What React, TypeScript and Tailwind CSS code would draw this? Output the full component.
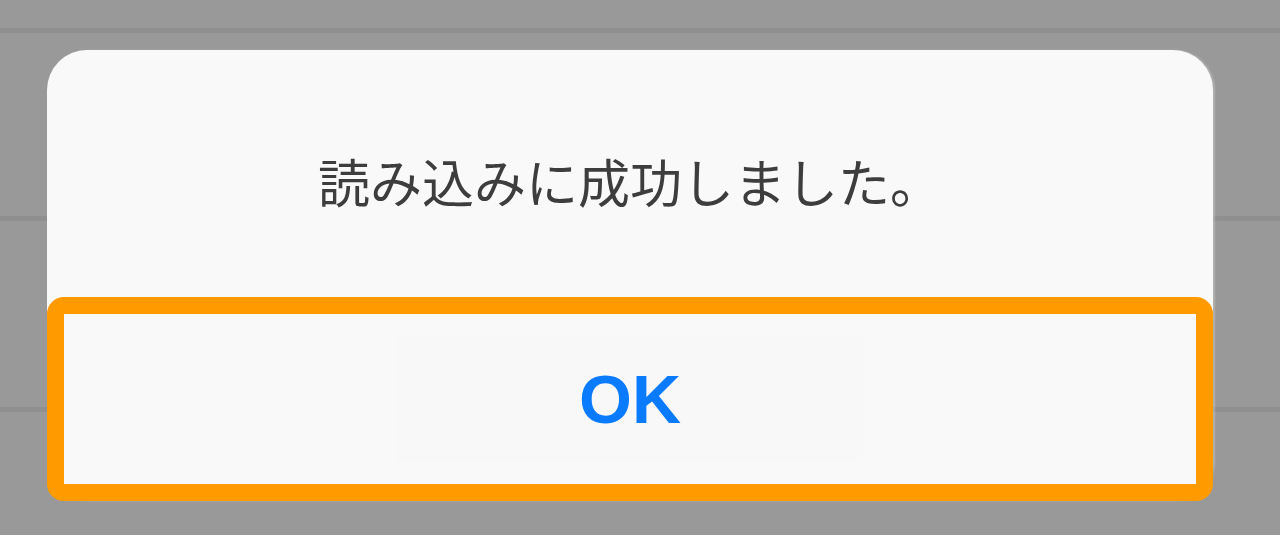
import React from 'react';

export default function App() {
  return (
    <div className="relative w-[1280px] h-[535px] overflow-hidden bg-[#999999]">
      {/* background list rows behind the alert */}
      <div className="flex flex-col">
        <div className="h-[33px] border-b-[5px] border-[#8f8f8f]" />
        <div className="h-[188px] border-b-[5px] border-[#8f8f8f]" />
        <div className="h-[191px] border-b-[5px] border-[#8f8f8f]" />
      </div>

      <div className="absolute left-[47px] top-[50px] w-[1166px] h-[451px] flex flex-col rounded-[40px] bg-[#f9f9f9] shadow-[2px_0_2px_rgba(255,255,255,0.25)]">
        <div className="h-[247px] flex items-center justify-center pt-[15px]">
          <p className="text-[52px] leading-none text-[#3d3d3d] font-['Noto_Sans_CJK_JP',sans-serif]">
            読み込みに成功しました。
          </p>
        </div>
        <div className="flex-1 rounded-[17px] border-[17px] border-[#ff9a00] bg-[#f9f9f9] flex items-center justify-center">
          <button className="w-[466px] h-[126px] bg-[#f8f8f8] flex items-center justify-center">
            <span className="text-[68px] font-bold leading-none text-[#0a7bff] font-['Liberation_Sans',Arial,sans-serif]">
              OK
            </span>
          </button>
        </div>
      </div>
    </div>
  );
}
